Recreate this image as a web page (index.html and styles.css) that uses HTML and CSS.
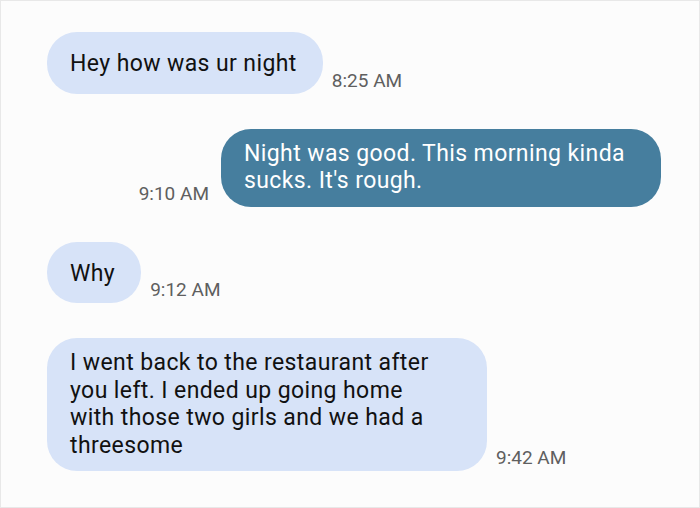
FILE: index.html
```html
<!DOCTYPE html>
<html lang="en">
<head>
    <meta charset="UTF-8">
    <meta name="viewport" content="width=device-width, initial-scale=1.0">
    <title>Messages</title>
    <link rel="stylesheet" href="styles.css">
</head>
<body>
    <div class="thread">
        <div class="row received">
            <div class="bubble single">Hey how was ur night</div>
            <span class="time">8:25 AM</span>
        </div>

        <div class="row sent">
            <span class="time">9:10 AM</span>
            <div class="bubble">Night was good. This morning kinda sucks. It's rough.</div>
        </div>

        <div class="row received">
            <div class="bubble single">Why</div>
            <span class="time">9:12 AM</span>
        </div>

        <div class="row received">
            <div class="bubble">I went back to the restaurant after you left. I ended up going home with those two girls and we had a threesome</div>
            <span class="time">9:42 AM</span>
        </div>
    </div>
</body>
</html>
```

FILE: styles.css
```css
html, body {
    margin: 0;
    padding: 0;
}
body {
    font-family: Roboto, "Liberation Sans", Arial, sans-serif;
    background: #fcfcfc;
    width: 700px;
    height: 508px;
    box-sizing: border-box;
    border: 1px solid #e8e8e8;
    overflow: hidden;
}
.thread {
    display: flex;
    flex-direction: column;
    gap: 35px;
    padding: 31px 38px 0 46px;
}
.row {
    display: flex;
    align-items: flex-end;
    gap: 9px;
}
.row.sent {
    justify-content: flex-end;
    gap: 12px;
}
.bubble {
    max-width: 381px;
    padding: 11px 36px 12px 23px;
    border-radius: 30px;
    font-size: 23px;
    letter-spacing: 0.4px;
    line-height: 27.5px;
    background: #d7e3f8;
    color: #111;
}
.bubble.single {
    padding: 18px 26px 16px 23px;
}
.sent .bubble {
    background: #467e9e;
    color: #fff;
}
.time {
    font-size: 19px;
    line-height: 22px;
    color: #5f5f5f;
    padding-bottom: 2px;
    white-space: nowrap;
}
```
